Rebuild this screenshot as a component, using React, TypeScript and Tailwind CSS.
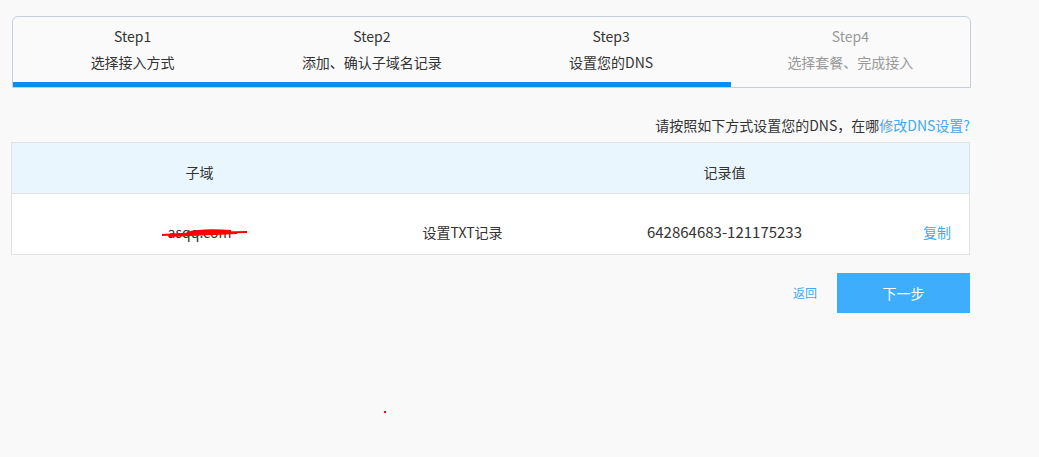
import React from "react";

const steps = [
  { title: "Step1", desc: "选择接入方式", done: true },
  { title: "Step2", desc: "添加、确认子域名记录", done: true },
  { title: "Step3", desc: "设置您的DNS", done: true },
  { title: "Step4", desc: "选择套餐、完成接入", done: false },
];

const font = { fontFamily: '"Noto Sans CJK SC", "Microsoft YaHei", sans-serif' };

export default function App() {
  return (
    <div className="w-[1039px] h-[457px] bg-[#f9f9f9] text-[#333] relative overflow-hidden" style={font}>
      <div className="pt-4 pl-3 w-[971px]">
        {/* step indicator */}
        <div className="relative h-[72px] border border-[#c6d0dd] rounded-t-[6px] bg-[#fafafa] flex">
          {steps.map((s) => (
            <div key={s.title} className="flex-1 flex flex-col items-center pt-[9px]">
              <span className={`text-[14px] leading-[20px] ${s.done ? "text-[#333]" : "text-[#999]"}`}>{s.title}</span>
              <span className={`text-[14px] leading-[20px] mt-[6px] ${s.done ? "text-[#333]" : "text-[#999]"}`}>{s.desc}</span>
            </div>
          ))}
          <div className="absolute left-0 bottom-0 h-[5px] w-[718px] bg-[#0a8cf5]" />
        </div>
      </div>

      <div className="w-[970px] pl-[11px]">
        <div className="mt-[27px] flex justify-end text-[14px] leading-[20px]">
          <span>请按照如下方式设置您的DNS，在哪</span>
          <span className="text-[#44a8f2]">修改DNS设置?</span>
        </div>

        {/* dns record table */}
        <div className="mt-[7px] border border-[#e2e2e2] bg-white text-[14px] leading-[20px]">
          <div className="grid grid-cols-[375px_151px_373px_1fr] h-[51px] bg-[#eaf6fe] border-b border-[#e2e2e2]">
            <div className="flex justify-center pt-[19px]">子域</div>
            <div />
            <div className="flex justify-center pt-[19px]">记录值</div>
            <div />
          </div>
          <div className="grid grid-cols-[375px_151px_373px_1fr] h-[60px]">
            <div className="flex justify-center pt-[28px]">
              <span className="relative">
                asqq.com
                <svg className="absolute left-[-7px] top-[6px]" width="90" height="12" viewBox="0 0 90 12">
                  <path d="M1 7 C20 6 40 5 86 4" stroke="#ff0000" strokeWidth="2" fill="none" />
                  <path d="M26 6 C40 2 56 3 70 4" stroke="#ff0000" strokeWidth="4" fill="none" />
                  <path d="M8 8 C30 7 50 6 76 5" stroke="#ff0000" strokeWidth="2" fill="none" />
                </svg>
              </span>
            </div>
            <div className="flex justify-center pt-[28px]">设置TXT记录</div>
            <div className="flex justify-center pt-[28px] text-[15px]">642864683-121175233</div>
            <div className="flex justify-center pt-[28px] pr-[6px] text-[#44a8f2]">复制</div>
          </div>
        </div>

        <div className="mt-[18px] flex justify-end items-center">
          <span className="text-[12px] text-[#44a8f2] mr-5">返回</span>
          <button className="w-[133px] h-[40px] bg-[#3eaefc] text-white text-[14px]">下一步</button>
        </div>
      </div>

      <div className="absolute left-[384px] top-[411px] w-[2px] h-[2px] bg-[#ff0000]" />
    </div>
  );
}
